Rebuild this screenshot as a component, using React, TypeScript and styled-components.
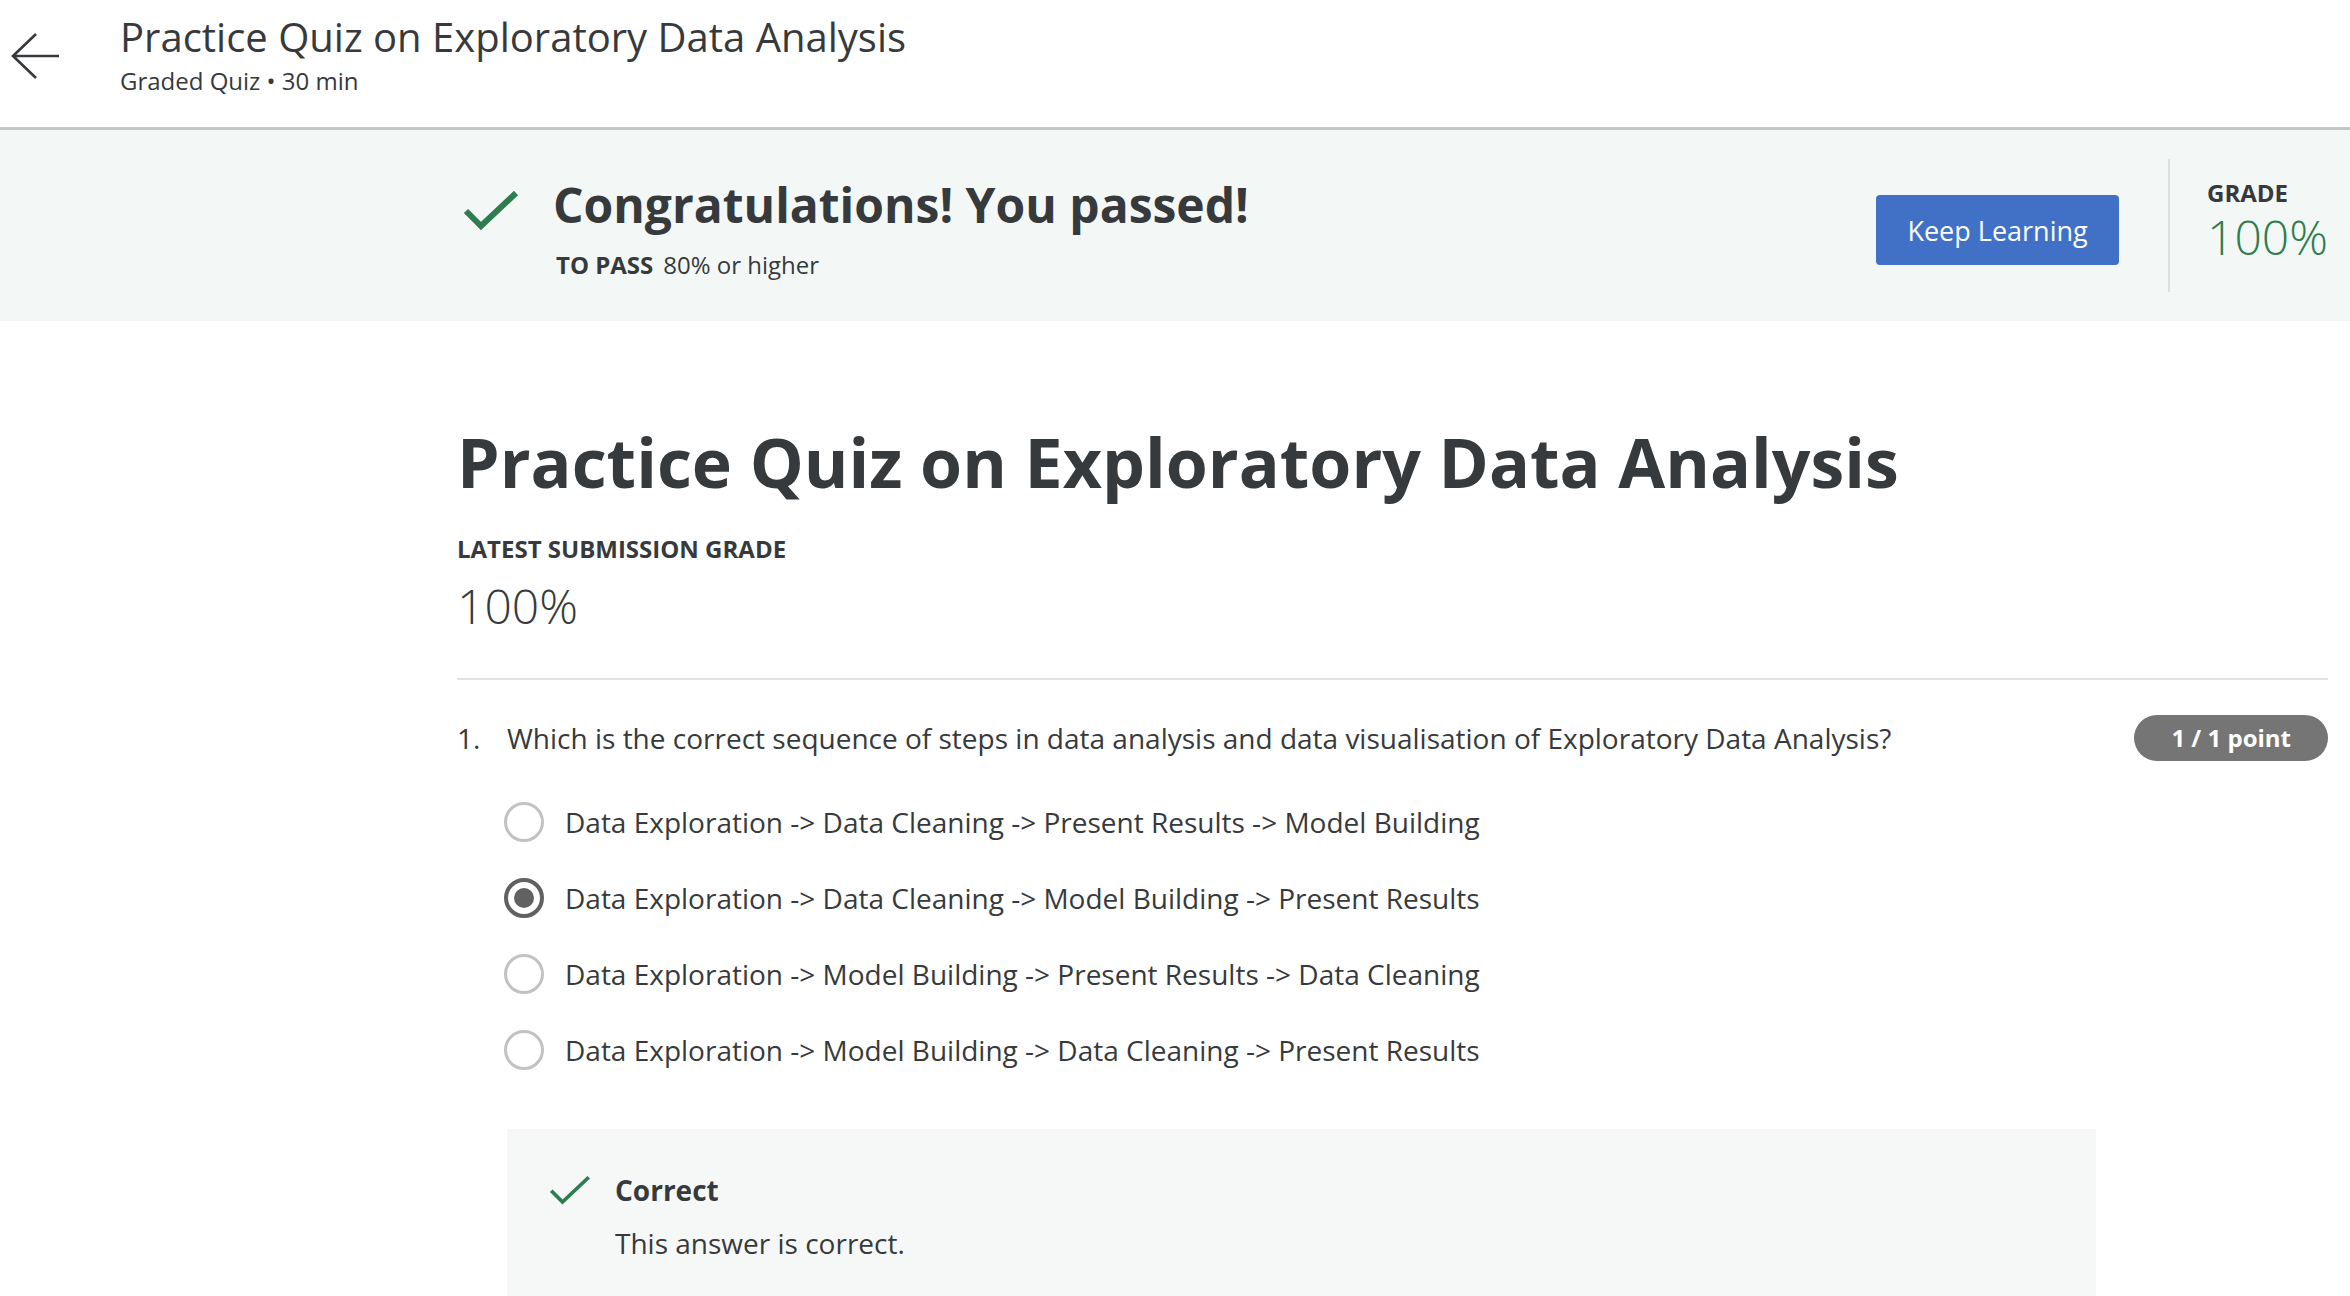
import React from "react";
import styled, { createGlobalStyle } from "styled-components";

const Global = createGlobalStyle`
  html, body { margin: 0; padding: 0; background: #ffffff; }
  body { font-family: "Open Sans", "Noto Sans", Arial, sans-serif; color: #373a3c; }
  * { box-sizing: border-box; }
`;

const Page = styled.div`
  width: 2350px;
  min-height: 1296px;
  overflow: hidden;
`;

const Header = styled.header`
  display: flex;
  align-items: flex-start;
  height: 130px;
  border-bottom: 3px solid #c6c6c6;
`;

const BackButton = styled.button`
  width: 120px;
  height: 100%;
  padding: 32px 0 0 11px;
  border: none;
  background: transparent;
  display: flex;
  align-items: flex-start;
  cursor: pointer;
`;

const HeaderText = styled.div`
  display: flex;
  flex-direction: column;
  padding-top: 13px;
`;

const HeaderTitle = styled.h1`
  margin: 0;
  font-size: 40px;
  line-height: 48px;
  font-weight: 400;
  color: #373a3c;
`;

const HeaderSub = styled.div`
  margin-top: 4px;
  font-size: 24px;
  line-height: 32px;
  color: #373a3c;
`;

const Banner = styled.section`
  display: flex;
  align-items: stretch;
  height: 191px;
  background: #f3f8f6;
  padding: 0 22px 0 457px;
`;

const BannerLeft = styled.div`
  flex: 1;
  display: flex;
  align-items: flex-start;
  padding-top: 46px;
`;

const BannerIcon = styled.div`
  width: 96px;
  padding: 14px 0 0 6px;
`;

const BannerTextCol = styled.div`
  display: flex;
  flex-direction: column;
`;

const BannerTitle = styled.h2`
  margin: 0;
  font-size: 48px;
  line-height: 58px;
  font-weight: 700;
  color: #373a3c;
`;

const PassLine = styled.div`
  margin-top: 15px;
  padding-left: 3px;
  font-size: 24px;
  line-height: 32px;
`;

const PassLabel = styled.span`
  font-weight: 700;
  margin-right: 10px;
`;

const BannerRight = styled.div`
  display: flex;
  align-items: center;
`;

const PrimaryButton = styled.button`
  width: 243px;
  height: 70px;
  margin-top: 9px;
  border: none;
  border-radius: 4px;
  background: #4171c7;
  color: #ffffff;
  font-family: "Open Sans", Arial, sans-serif;
  font-size: 27px;
  font-weight: 400;
  cursor: pointer;
`;

const VDivider = styled.div`
  width: 2px;
  height: 133px;
  margin: 0 37px 0 49px;
  background: #dedede;
`;

const GradeCol = styled.div`
  display: flex;
  flex-direction: column;
  padding-bottom: 9px;
`;

const SmallCaps = styled.div`
  font-size: 24px;
  line-height: 32px;
  font-weight: 700;
  color: #373a3c;
`;

const BigPercent = styled.div<{ $green?: boolean }>`
  font-size: 48px;
  line-height: 56px;
  font-weight: 300;
  color: ${(p) => (p.$green ? "#2e7d4f" : "#373a3c")};
`;

const Main = styled.main`
  padding: 100px 22px 0 457px;
`;

const QuizTitle = styled.h1`
  margin: 0;
  font-size: 68px;
  line-height: 82px;
  font-weight: 700;
  color: #373a3c;
`;

const SubmissionBlock = styled.div`
  margin-top: 30px;
  display: flex;
  flex-direction: column;
  gap: 13px;
  padding-bottom: 44px;
  border-bottom: 2px solid #e2e2e2;
`;

const Question = styled.div`
  padding-top: 35px;
`;

const QuestionRow = styled.div`
  display: flex;
  align-items: center;
  font-size: 28px;
  line-height: 38px;
`;

const QNum = styled.span`
  width: 50px;
`;

const QText = styled.span`
  flex: 1;
`;

const PointsPill = styled.span`
  height: 46px;
  padding: 0 37px;
  border-radius: 23px;
  background: #757575;
  color: #ffffff;
  font-size: 24px;
  font-weight: 700;
  display: flex;
  align-items: center;
`;

const Options = styled.div`
  margin-top: 41px;
  padding-left: 47px;
  display: flex;
  flex-direction: column;
  gap: 36px;
`;

const OptionRow = styled.label`
  display: flex;
  align-items: center;
  gap: 21px;
  font-size: 28px;
  line-height: 40px;
`;

const Radio = styled.span<{ $checked?: boolean }>`
  width: 40px;
  height: 40px;
  border-radius: 50%;
  border: ${(p) => (p.$checked ? "4px solid #616161" : "3px solid #c2c2c2")};
  display: flex;
  align-items: center;
  justify-content: center;
  flex-shrink: 0;
`;

const RadioDot = styled.span`
  width: 20px;
  height: 20px;
  border-radius: 50%;
  background: #616161;
`;

const Feedback = styled.div`
  margin: 59px 232px 0 50px;
  background: #f6f8f8;
  padding: 41px 42px 40px;
  min-height: 200px;
`;

const FeedbackHead = styled.div`
  display: flex;
  align-items: center;
  gap: 24px;
  font-size: 28px;
  font-weight: 700;
  line-height: 40px;
`;

const FeedbackBody = styled.div`
  margin-top: 14px;
  padding-left: 66px;
  font-size: 28px;
  line-height: 38px;
`;

const options = [
  "Data Exploration -> Data Cleaning -> Present Results -> Model Building",
  "Data Exploration -> Data Cleaning -> Model Building -> Present Results",
  "Data Exploration -> Model Building -> Present Results -> Data Cleaning",
  "Data Exploration -> Model Building -> Data Cleaning -> Present Results",
];

const Check = ({ w, h, sw }: { w: number; h: number; sw: number }) => (
  <svg width={w} height={h} viewBox="0 0 56 40" fill="none">
    <path d="M3 21 L18 36 L53 3" stroke="#2e7d4f" strokeWidth={sw} strokeLinecap="butt" strokeLinejoin="miter" />
  </svg>
);

export default function App() {
  return (
    <Page>
      <Global />
      <Header>
        <BackButton aria-label="Back">
          <svg width="50" height="48" viewBox="0 0 50 48" fill="none">
            <path d="M25 2 L2 24 L25 46 M2 24 H48" stroke="#373a3c" strokeWidth="2.6" />
          </svg>
        </BackButton>
        <HeaderText>
          <HeaderTitle>Practice Quiz on Exploratory Data Analysis</HeaderTitle>
          <HeaderSub>Graded Quiz • 30 min</HeaderSub>
        </HeaderText>
      </Header>

      <Banner>
        <BannerLeft>
          <BannerIcon>
            <Check w={56} h={40} sw={6} />
          </BannerIcon>
          <BannerTextCol>
            <BannerTitle>Congratulations! You passed!</BannerTitle>
            <PassLine>
              <PassLabel>TO PASS</PassLabel>80% or higher
            </PassLine>
          </BannerTextCol>
        </BannerLeft>
        <BannerRight>
          <PrimaryButton>Keep Learning</PrimaryButton>
          <VDivider />
          <GradeCol>
            <SmallCaps>GRADE</SmallCaps>
            <BigPercent $green>100%</BigPercent>
          </GradeCol>
        </BannerRight>
      </Banner>

      <Main>
        <QuizTitle>Practice Quiz on Exploratory Data Analysis</QuizTitle>
        <SubmissionBlock>
          <SmallCaps>LATEST SUBMISSION GRADE</SmallCaps>
          <BigPercent>100%</BigPercent>
        </SubmissionBlock>
        <Question>
          <QuestionRow>
            <QNum>1.</QNum>
            <QText>
              Which is the correct sequence of steps in data analysis and data visualisation of Exploratory Data Analysis?
            </QText>
            <PointsPill>1 / 1 point</PointsPill>
          </QuestionRow>
          <Options>
            {options.map((o, i) => (
              <OptionRow key={i}>
                <Radio $checked={i === 1}>{i === 1 && <RadioDot />}</Radio>
                {o}
              </OptionRow>
            ))}
          </Options>
          <Feedback>
            <FeedbackHead>
              <Check w={42} h={32} sw={5} />
              Correct
            </FeedbackHead>
            <FeedbackBody>This answer is correct.</FeedbackBody>
          </Feedback>
        </Question>
      </Main>
    </Page>
  );
}
